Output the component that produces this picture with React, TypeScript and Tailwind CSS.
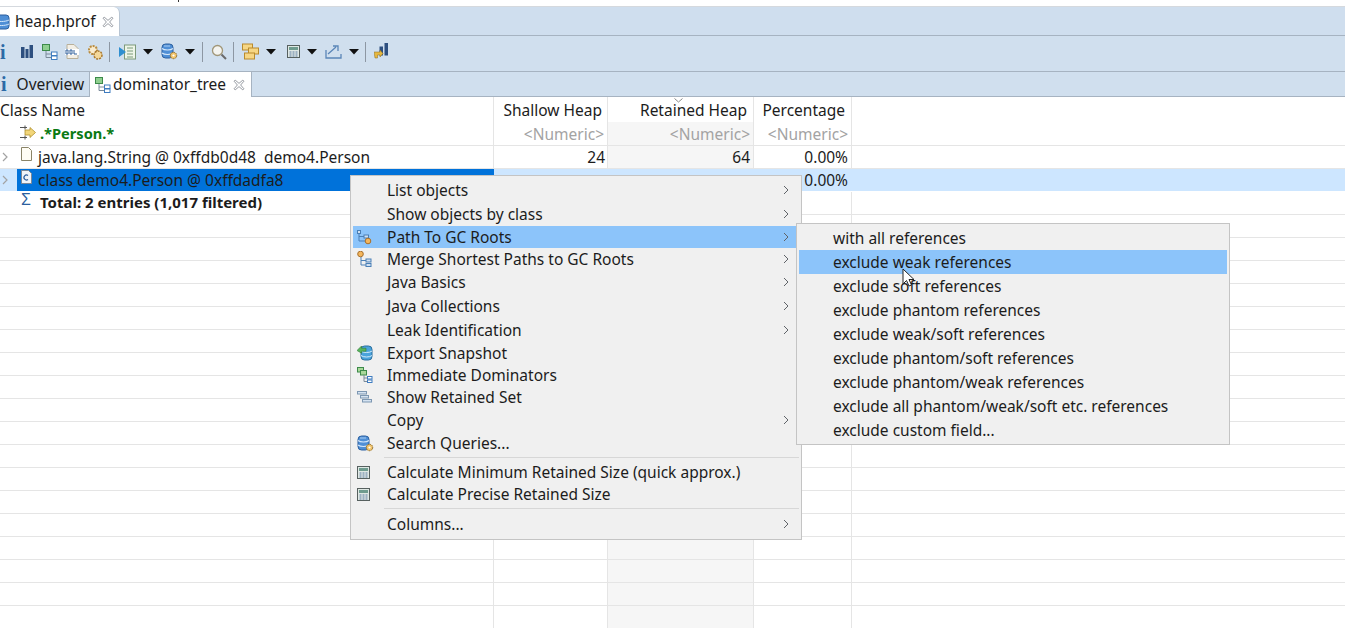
import React from "react";

const Close = () => (
  <svg width="12" height="12" viewBox="0 0 11 11" className="shrink-0">
    <path d="M1 2 L2 1 L5.500 4 L9 1 L10 2 L7 5.500 L10 9 L9 10 L5.500 7 L2 10 L1 9 L4 5.500 Z" fill="#fff" stroke="#8a8f96" strokeWidth="0.8" />
  </svg>
);
const Drop = () => (
  <svg width="10" height="6" viewBox="0 0 10 6" className="shrink-0"><path d="M0 0H10L5 5.500Z" fill="#111" /></svg>
);
const Sep = () => <div className="w-px h-[20px] bg-[#8d97a3] shrink-0" />;
const Info = () => (
  <span className="font-['Liberation_Serif',serif] font-bold text-[20px] leading-none text-[#2c6aa6]">i</span>
);
const Db = () => (
  <svg width="17" height="17" viewBox="0 0 17 17" className="shrink-0">
    <rect x="1" y="1" width="11" height="14" rx="3.500" fill="#4f8fd6" stroke="#2c5f9e" />
    <path d="M1 5.500c2.500 2 8.500 2 11 0M1 10c2.500 2 8.500 2 11 0" stroke="#d6e8fa" fill="none" strokeWidth="1.200" />
    <path d="M3 3h6" stroke="#a9cdf2" />
    <circle cx="12.500" cy="12.500" r="3.200" fill="#f2c46a" stroke="#8a6a2c" strokeDasharray="1.500 .6" />
    <circle cx="12.500" cy="12.500" r="1.100" fill="#fff" />
  </svg>
);
const Tree = () => (
  <svg width="16" height="16" viewBox="0 0 16 16" className="shrink-0">
    <rect x="0.500" y="0.500" width="7" height="6" fill="#8fcf8f" stroke="#3d8a4a" />
    <path d="M4 7V13.500H9M4 10H9" stroke="#7a8a9a" fill="none" />
    <rect x="9.500" y="8" width="5.500" height="3.500" fill="#fff" stroke="#3f7cc0" />
    <rect x="9.500" y="12" width="5.500" height="3.500" fill="#fff" stroke="#3f7cc0" />
  </svg>
);
const Calc = () => (
  <svg width="13" height="13" viewBox="0 0 13 13" className="shrink-0">
    <rect x="0.500" y="0.500" width="12" height="12" fill="#dfe8e4" stroke="#56605f" />
    <rect x="2" y="2" width="9" height="3" fill="#6f9c8f" />
    <path d="M2.500 7h2M5.500 7h2M8.500 7h2M2.500 9h2M5.500 9h2M8.500 9h2M2.500 11h2M5.500 11h2M8.500 11h2" stroke="#5b7aa0" strokeWidth="1" />
  </svg>
);
const Chevron = () => (
  <svg width="6" height="10" viewBox="0 0 6 10" className="shrink-0"><path d="M1 1L5 5L1 9" fill="none" stroke="#5f6368" strokeWidth="1" /></svg>
);

const Toolbar = () => (
  <div className="flex items-center h-[36px] pb-[4px] bg-[#d0dfee] border-b border-[#a6b3c1]">
    <div className="w-[6px] flex justify-start"><Info /></div>
    <svg width="12" height="13" viewBox="0 0 12 13" className="ml-[15px] shrink-0"><path d="M0 2h3.500v11H0zM4.500 4h3v9h-3zM8.500 0h3.500v13H8.500z" fill="#2d4f7f" /></svg>
    <div className="ml-[9px]"><Tree /></div>
    <svg width="14" height="15" viewBox="0 0 14 15" className="ml-[7px] shrink-0">
      <path d="M2 .5h7l4 4v10H2z" fill="#f3efe6" stroke="#b9b09a" />
      <rect x="0" y="5" width="14" height="6" fill="#fff" />
      <path d="M1 6v4h2V6zM5 6v4h2V6zM9 6v4h3" fill="none" stroke="#2f5f9a" strokeWidth="1" />
    </svg>
    <svg width="16" height="16" viewBox="0 0 16 16" className="ml-[8px] shrink-0">
      <circle cx="6" cy="6" r="4" fill="#f9ecd0" stroke="#b98a3c" strokeWidth="2" strokeDasharray="2 1" />
      <circle cx="11" cy="11" r="4" fill="#f4d89a" stroke="#a8762c" strokeWidth="1.500" strokeDasharray="2 1" />
    </svg>
    <div className="ml-[6px]"><Sep /></div>
    <svg width="17" height="16" viewBox="0 0 17 16" className="ml-[9px] shrink-0">
      <rect x="5.500" y="1" width="11" height="14" fill="#eef5e8" stroke="#7d9a7a" />
      <path d="M8 4h6M8 7h6M8 10h6M8 13h6" stroke="#7a9a7a" />
      <path d="M0 3L7 8L0 13Z" fill="#2f8fd0" />
    </svg>
    <div className="ml-[7px]"><Drop /></div>
    <div className="ml-[8px]"><Db /></div>
    <div className="ml-[7px]"><Drop /></div>
    <div className="ml-[7px]"><Sep /></div>
    <svg width="16" height="16" viewBox="0 0 16 16" className="ml-[8px] shrink-0">
      <circle cx="6.500" cy="6.500" r="5" fill="#f4f4f0" stroke="#a09678" strokeWidth="1.300" />
      <path d="M10.500 10.500L15 15" stroke="#6a6a6a" strokeWidth="2" />
    </svg>
    <div className="ml-[6px]"><Sep /></div>
    <svg width="17" height="17" viewBox="0 0 17 17" className="ml-[8px] shrink-0">
      <rect x="0.500" y="1" width="10" height="6" fill="#f6d684" stroke="#b98a2c" />
      <rect x="6.500" y="5" width="10" height="6" fill="#f6d684" stroke="#b98a2c" />
      <rect x="2.500" y="10" width="10" height="6" fill="#f6d684" stroke="#b98a2c" />
    </svg>
    <div className="ml-[7px]"><Drop /></div>
    <div className="ml-[11px]"><Calc /></div>
    <div className="ml-[7px]"><Drop /></div>
    <svg width="17" height="15" viewBox="0 0 17 15" className="ml-[8px] shrink-0">
      <path d="M1 6v8h15v-4" fill="none" stroke="#5a86b8" strokeWidth="1.300" />
      <path d="M3 10L11 3M8 2h5v5" fill="none" stroke="#5a86b8" strokeWidth="1.300" />
    </svg>
    <div className="ml-[7px]"><Drop /></div>
    <div className="ml-[6px]"><Sep /></div>
    <svg width="15" height="17" viewBox="0 0 15 17" className="ml-[8px] shrink-0">
      <path d="M5.500 3.500h3.500v9H5.500zM10.500 0h3.500v12.500h-3.500z" fill="#2d4f7f" />
      <path d="M0 9h6v-2l3 3.500-3 3.500v-2H3.500v3H1z" fill="#e6b840" stroke="#8a6a1c" strokeWidth=".5" />
    </svg>
  </div>
);

const lines = Array.from({ length: 18 });

const Row = ({ name, a, b, c, selected, arrow, bold }: { name?: React.ReactNode; a?: string; b?: string; c?: string; selected?: boolean; arrow?: boolean; bold?: boolean }) => (
  <div className={`flex h-[23px] border-b shrink-0 ${selected ? "bg-[#cde6ff] border-white" : "border-[#e5e5e5]"}`}>
    <div className="w-[17px] shrink-0 flex items-center pl-[2px]">
      {arrow && <svg width="6" height="10" viewBox="0 0 6 10"><path d="M1 1L5 5L1 9" fill="none" stroke="#a3a3a3" strokeWidth="1.200" /></svg>}
    </div>
    <div className={`w-[477px] shrink-0 flex items-center border-r ${selected ? "bg-[#0072da] border-[#0072da]" : "border-[#e5e5e5]"} ${bold ? "font-bold text-[15px]" : ""}`}>{name}</div>
    <div className={`w-[114px] shrink-0 text-right pr-[2px] border-r leading-[23px] ${selected ? "border-transparent" : "border-[#e5e5e5]"}`}>{a}</div>
    <div className={`w-[146px] shrink-0 text-right pr-[3px] border-r leading-[23px] ${selected ? "border-transparent" : "bg-[#f6f6f6] border-[#e5e5e5]"}`}>{b}</div>
    <div className={`w-[98px] shrink-0 text-right pr-[3px] border-r leading-[23px] ${selected ? "border-transparent" : "border-[#e5e5e5]"}`}>{c}</div>
  </div>
);

type MI = { t: string; sub?: boolean; icon?: React.ReactNode; h: string; active?: boolean };

const PathIcon = () => (
  <svg width="15" height="15" viewBox="0 0 15 15">
    <path d="M2 3V11H8M2 6.500H7" stroke="#4a7fb5" fill="none" />
    <rect x="0.500" y="0.500" width="3" height="3" fill="#cfe0f2" stroke="#4a7fb5" />
    <rect x="7" y="5" width="4.500" height="3" fill="#cfe0f2" stroke="#4a7fb5" />
    <circle cx="11" cy="11" r="2.800" fill="#f4b65c" stroke="#a8702c" />
  </svg>
);
const MergeIcon = () => (
  <svg width="16" height="16" viewBox="0 0 16 16">
    <path d="M4 5V14H9M4 9.500H9" stroke="#4a7fb5" fill="none" />
    <circle cx="3.500" cy="3" r="2.800" fill="#f4b65c" stroke="#a8702c" />
    <rect x="9" y="8" width="5" height="3" fill="#cfe0f2" stroke="#4a7fb5" />
    <rect x="9" y="12.500" width="5" height="3" fill="#cfe0f2" stroke="#4a7fb5" />
  </svg>
);
const ExportIcon = () => (
  <svg width="16" height="16" viewBox="0 0 16 16">
    <rect x="4" y="1" width="11" height="14" rx="3.500" fill="#4aa3dc" stroke="#2c6f9e" />
    <path d="M4 6c2 2 9 2 11 0M4 10.500c2 2 9 2 11 0" stroke="#d5ecf9" fill="none" />
    <path d="M0 5.500L4.500 1v2.200H9v3H4.500v2z" fill="#58b65c" stroke="#2f7a38" strokeWidth=".6" />
  </svg>
);
const DomIcon = () => (
  <svg width="16" height="16" viewBox="0 0 16 16">
    <rect x="0.500" y="0.500" width="6" height="4.500" fill="#a9d89a" stroke="#3d8a4a" />
    <rect x="3.500" y="3.500" width="6" height="4.500" fill="#a9d89a" stroke="#3d8a4a" />
    <path d="M7 8V14.500H10.500M7 11H10.500" stroke="#7a8a9a" fill="none" />
    <rect x="10.500" y="9.500" width="4.500" height="2.500" fill="#fff" stroke="#3f7cc0" />
    <rect x="10.500" y="13" width="4.500" height="2.500" fill="#fff" stroke="#3f7cc0" />
  </svg>
);
const RetIcon = () => (
  <svg width="15" height="12" viewBox="0 0 15 12">
    <rect x="0.500" y="0.500" width="9" height="2.500" fill="#d5e3f1" stroke="#7d97b2" />
    <rect x="3.500" y="4.500" width="8" height="2.500" fill="#d5e3f1" stroke="#7d97b2" />
    <rect x="5.500" y="8.500" width="9" height="2.500" fill="#d5e3f1" stroke="#7d97b2" />
  </svg>
);

const items: (MI | "sep")[] = [
  { t: "List objects", sub: true, h: "h-[24px]" },
  { t: "Show objects by class", sub: true, h: "h-[24px]" },
  { t: "Path To GC Roots", sub: true, icon: <PathIcon />, h: "h-[22px]", active: true },
  { t: "Merge Shortest Paths to GC Roots", sub: true, icon: <MergeIcon />, h: "h-[22px]" },
  { t: "Java Basics", sub: true, h: "h-[24px]" },
  { t: "Java Collections", sub: true, h: "h-[24px]" },
  { t: "Leak Identification", sub: true, h: "h-[24px]" },
  { t: "Export Snapshot", icon: <ExportIcon />, h: "h-[22px]" },
  { t: "Immediate Dominators", icon: <DomIcon />, h: "h-[22px]" },
  { t: "Show Retained Set", icon: <RetIcon />, h: "h-[22px]" },
  { t: "Copy", sub: true, h: "h-[24px]" },
  { t: "Search Queries...", icon: <Db />, h: "h-[22px]" },
  "sep",
  { t: "Calculate Minimum Retained Size (quick approx.)", icon: <Calc />, h: "h-[22px]" },
  { t: "Calculate Precise Retained Size", icon: <Calc />, h: "h-[22px]" },
  "sep",
  { t: "Columns...", sub: true, h: "h-[24px]" },
];

const subItems = [
  "with all references",
  "exclude weak references",
  "exclude soft references",
  "exclude phantom references",
  "exclude weak/soft references",
  "exclude phantom/soft references",
  "exclude phantom/weak references",
  "exclude all phantom/weak/soft etc. references",
  "exclude custom field...",
];

export default function App() {
  return (
    <div className="relative w-[1345px] h-[628px] overflow-hidden bg-white text-[15.5px] text-[#1c1c1c] font-['Noto_Sans','Open_Sans',sans-serif]">
      <div className="relative h-[7px] bg-white border-b border-[#d5d9de]">
        <div className="absolute left-[178px] top-0 w-px h-[2px] bg-[#333]" />
      </div>
      {/* Editor tabs */}
      <div className="flex h-[29px] bg-[#cfdeee] border-b border-[#a6b3c1]">
        <div className="w-[120px] h-[29px] bg-white rounded-tr-[6px] flex items-center gap-[6px] border-r border-[#b8c5d3] overflow-hidden">
          <svg width="10" height="16" viewBox="0 0 10 16" className="shrink-0">
            <rect x="-6" y="1" width="15" height="14" rx="3" fill="#4f8fd6" stroke="#2c5f9e" />
            <path d="M-6 6c4 2 11 2 15 0M-6 10c4 2 11 2 15 0" stroke="#d6e8fa" fill="none" />
          </svg>
          <span className="leading-none -ml-[1px] mt-[1px]">heap.hprof</span>
          <Close />
        </div>
      </div>
      <Toolbar />
      {/* Result tabs */}
      <div className="flex h-[25px] bg-[#d0dfee] border-b border-[#a6b3c1]">
        <div className="w-[90px] flex items-center pl-[1px] border-r border-[#a6b3c1]">
          <Info />
          <span className="ml-[10px] leading-none mt-[1px]">Overview</span>
        </div>
        <div className="w-[162px] h-[25px] bg-white border-r border-[#a6b3c1] flex items-center pl-[5px]">
          <Tree />
          <span className="ml-[2px] leading-none mt-[1px]">dominator_tree</span>
          <span className="ml-[7px] mt-[1px]"><Close /></span>
        </div>
      </div>
      {/* Table */}
      <div className="relative flex flex-col">
        <div className="flex h-[25px] leading-[26px]">
          <div className="w-[494px] border-r border-[#e5e5e5]">Class Name</div>
          <div className="w-[114px] text-right pr-[5px] border-r border-[#e5e5e5]">Shallow Heap</div>
          <div className="relative w-[146px] text-right pr-[6px] border-r border-[#e5e5e5]">
            Retained Heap
            <svg width="9" height="5" viewBox="0 0 9 5" className="absolute left-[66px] top-[1px]"><path d="M.5.5L4.500 4L8.500.5" fill="none" stroke="#8a8a8a" /></svg>
          </div>
          <div className="w-[98px] text-right pr-[6px] border-r border-[#e5e5e5]">Percentage</div>
        </div>
        <div className="flex h-[24px] border-b border-[#e5e5e5] leading-[24px] text-[#a3a3a3]">
          <div className="w-[494px] border-r border-[#e5e5e5] flex items-center pl-[20px]">
            <svg width="17" height="15" viewBox="0 0 17 15" className="shrink-0 -mt-[3px]">
              <path d="M0 2.500h7M5 .5v4M0 12.500h7M5 10.500v4" stroke="#555" fill="none" />
              <path d="M5 5h5V2.500l5.500 5-5.500 5V10H5z" fill="#f2d67a" stroke="#b0902c" strokeWidth=".8" />
            </svg>
            <span className="ml-[3px] font-bold text-[14.6px] text-[#0a7a14] -mt-[1px]">.*Person.*</span>
          </div>
          <div className="w-[114px] text-right pr-[3px] border-r border-[#e5e5e5]">&lt;Numeric&gt;</div>
          <div className="w-[146px] text-right pr-[3px] border-r border-[#e5e5e5] bg-[#f6f6f6]">&lt;Numeric&gt;</div>
          <div className="w-[98px] text-right pr-[3px] border-r border-[#e5e5e5]">&lt;Numeric&gt;</div>
        </div>
        <Row
          arrow
          a="24"
          b="64"
          c="0.00%"
          name={
            <>
              <svg width="14" height="16" viewBox="0 0 14 16" className="ml-[3px] -mt-[6px] shrink-0">
                <path d="M1.500 1.500h7l3 3v10h-10z" fill="#fffdf4" stroke="#8a8468" />
              </svg>
              <span className="ml-[4px] mt-[1px] whitespace-pre">java.lang.String @ 0xffdb0d48  demo4.Person</span>
            </>
          }
        />
        <Row
          arrow
          selected
          c="0.00%"
          name={
            <>
              <svg width="14" height="16" viewBox="0 0 14 16" className="ml-[3px] -mt-[6px] shrink-0">
                <path d="M1.500 1.500h7l3 3v10h-10z" fill="#eef3f9" stroke="#7b8796" />
                <path d="M8 6.500a2.500 2.500 0 1 0 0 4" fill="none" stroke="#2b5d9e" strokeWidth="1.200" />
              </svg>
              <span className="ml-[4px] mt-[1px]">class demo4.Person @ 0xffdadfa8</span>
            </>
          }
        />
        <Row
          bold
          name={
            <>
              <span className="ml-[4px] -mt-[6px] w-[19px] font-normal text-[16px] leading-none text-[#2c5f9e] font-['Liberation_Sans',sans-serif]">Σ</span>
              <span className="-mt-[1px]">Total: 2 entries (1,017 filtered)</span>
            </>
          }
        />
        {lines.map((_, i) => (
          <Row key={i} />
        ))}

        {/* Context menu */}
        <div className="absolute left-[350px] top-[78px] w-[452px] h-[365px] bg-[#f0f0f0] border border-[#c4c4c4] pt-[2px] px-[2px]">
          {items.map((it, i) =>
            it === "sep" ? (
              <div key={i} className="h-[7px] pl-[31px] flex items-center">
                <div className="h-px w-full bg-[#d7d7d7]" />
              </div>
            ) : (
              <div key={i} className={`flex items-center ${it.h} ${it.active ? "bg-[#8cc4fa]" : ""}`}>
                <div className="w-[34px] pl-[4px] shrink-0 flex items-center">{it.icon}</div>
                <span className="whitespace-nowrap grow leading-none mt-[2px]">{it.t}</span>
                {it.sub && <span className="mr-[10px]"><Chevron /></span>}
              </div>
            )
          )}
        </div>

        {/* Submenu */}
        <div className="absolute left-[796px] top-[126px] w-[434px] h-[222px] bg-[#f0f0f0] border border-[#c4c4c4] pt-[2px] px-[2px]">
          {subItems.map((t, i) => (
            <div key={t} className={`h-[24px] pl-[34px] flex items-center ${i === 1 ? "bg-[#8cc4fa]" : ""}`}>
              <span className="leading-none whitespace-nowrap mt-[2px]">{t}</span>
            </div>
          ))}
        </div>

        {/* Mouse cursor */}
        <svg width="14" height="20" viewBox="0 0 14 20" className="absolute left-[902px] top-[171px]">
          <path d="M1 1V16L4.500 12.500L7 18L9.500 17L7 11.500H12Z" fill="#fff" stroke="#222" strokeWidth="1" />
        </svg>
      </div>
    </div>
  );
}
